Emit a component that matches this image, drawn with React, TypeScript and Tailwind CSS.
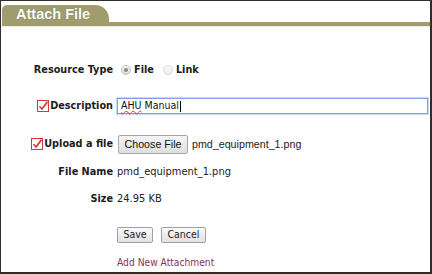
const labelFont = { fontFamily: '"DejaVu Sans Condensed", "Liberation Sans", sans-serif' };

function RedCheck() {
  return (
    <svg width="12" height="12" viewBox="0 0 12 12" className="mr-px shrink-0">
      <rect x="0.5" y="0.5" width="11" height="11" fill="#fff" stroke="#d6343e" />
      <path d="M2.5 6.2 L5 9 L10.5 1.8" fill="none" stroke="#d6343e" strokeWidth="1.7" />
    </svg>
  );
}

function Radio({ checked }: { checked?: boolean }) {
  return (
    <span
      className={
        checked
          ? 'w-[10px] h-[10px] rounded-full border border-[#c4c4c4] bg-gradient-to-b from-[#f2f2f2] to-[#dcdcdc] flex items-center justify-center'
          : 'block w-[10px] h-[10px] rounded-full border border-[#d8d8d8] bg-gradient-to-b from-[#fbfbfb] to-[#ececec]'
      }
    >
      {checked && <span className="w-[4px] h-[4px] rounded-full bg-[#8a8a8a]" />}
    </span>
  );
}

function Row({ label, check, className, children }: { label: string; check?: boolean; className: string; children?: React.ReactNode }) {
  return (
    <div className={`flex items-center ${className}`}>
      <div className="w-[112px] flex items-center justify-end font-bold text-[10.8px] text-[#1c1c1c]">
        {check && <RedCheck />}
        {label}
      </div>
      <div className="flex-1 flex items-center pl-[4px]">{children}</div>
    </div>
  );
}

export default function App() {
  return (
    <div className="w-[432px] h-[274px] bg-white border-l border-t border-r-2 border-b-2 border-[#2e2e2e] flex flex-col overflow-hidden" style={labelFont}>
      <div className="pt-[4px] pl-[1px]">
        <div
          className="w-[107px] h-[17px] bg-[#9f9d6d] rounded-tl-[5px] rounded-tr-[14px] pl-[14px] pt-px flex items-center text-white font-bold text-[14.5px] leading-none"
          style={{ fontFamily: '"Liberation Sans", Arial, sans-serif', textShadow: '0 0 1px rgba(60,60,40,0.6)' }}
        >
          Attach File
        </div>
        <div className="h-[4px] bg-[#9f9d6d]" />
        <div className="h-px bg-[#ebebe0]" />
      </div>

      <Row label="Resource Type" className="h-[18px] mt-[34px]">
        <div className="flex items-center font-bold text-[10.8px] text-[#1c1c1c]">
          <span className="ml-[4px]"><Radio checked /></span>
          <span className="ml-[3px]">File</span>
          <span className="ml-[9px]"><Radio /></span>
          <span className="ml-[3px]">Link</span>
        </div>
      </Row>

      <Row label="Description" check className="h-[18px] mt-[18px]">
        <div className="w-[311px] h-[16px] border border-[#7fa4e2] shadow-[0_0_0_1px_#c7d8f3] flex items-center pl-[3px] text-[10.5px] text-[#111]">
          <span className="underline decoration-wavy decoration-[#e0302f] decoration-1 underline-offset-[1px]">AHU</span>
          <span>&nbsp;Manual</span>
          <span className="w-px h-[11px] bg-black ml-px" />
        </div>
      </Row>

      <Row label="Upload a file" check className="h-[18px] mt-[20px]">
        <div className="flex items-center" style={{ fontFamily: '"Liberation Sans", Arial, sans-serif' }}>
          <button className="h-[19px] w-[70px] ml-px border border-[#a6a6a6] rounded-[2px] bg-gradient-to-b from-[#f6f6f6] to-[#dedede] text-[10.7px] text-[#111] flex items-center justify-center">
            Choose File
          </button>
          <span className="ml-[4px] text-[10.7px] text-[#222]">pmd_equipment_1.png</span>
        </div>
      </Row>

      <Row label="File Name" className="h-[18px] mt-[10px]">
        <span className="text-[11px] text-[#222]">pmd_equipment_1.png</span>
      </Row>

      <Row label="Size" className="h-[18px] mt-[9px]">
        <span className="text-[11px] text-[#222]">24.95 KB</span>
      </Row>

      <Row label="" className="h-[18px] mt-[18px]">
        <div className="flex items-center gap-[8px]">
          <button className="w-[36px] h-[16px] border border-[#a0a0a0] rounded-[2px] bg-gradient-to-b from-[#fafafa] to-[#e2e2e2] text-[10.5px] text-[#222] flex items-center justify-center">
            Save
          </button>
          <button className="w-[45px] h-[16px] border border-[#a0a0a0] rounded-[2px] bg-gradient-to-b from-[#fafafa] to-[#e2e2e2] text-[10.5px] text-[#222] flex items-center justify-center">
            Cancel
          </button>
        </div>
      </Row>

      <Row label="" className="h-[16px] mt-[11px]">
        <span className="text-[10.2px] text-[#8a3158]">Add New Attachment</span>
      </Row>
    </div>
  );
}
